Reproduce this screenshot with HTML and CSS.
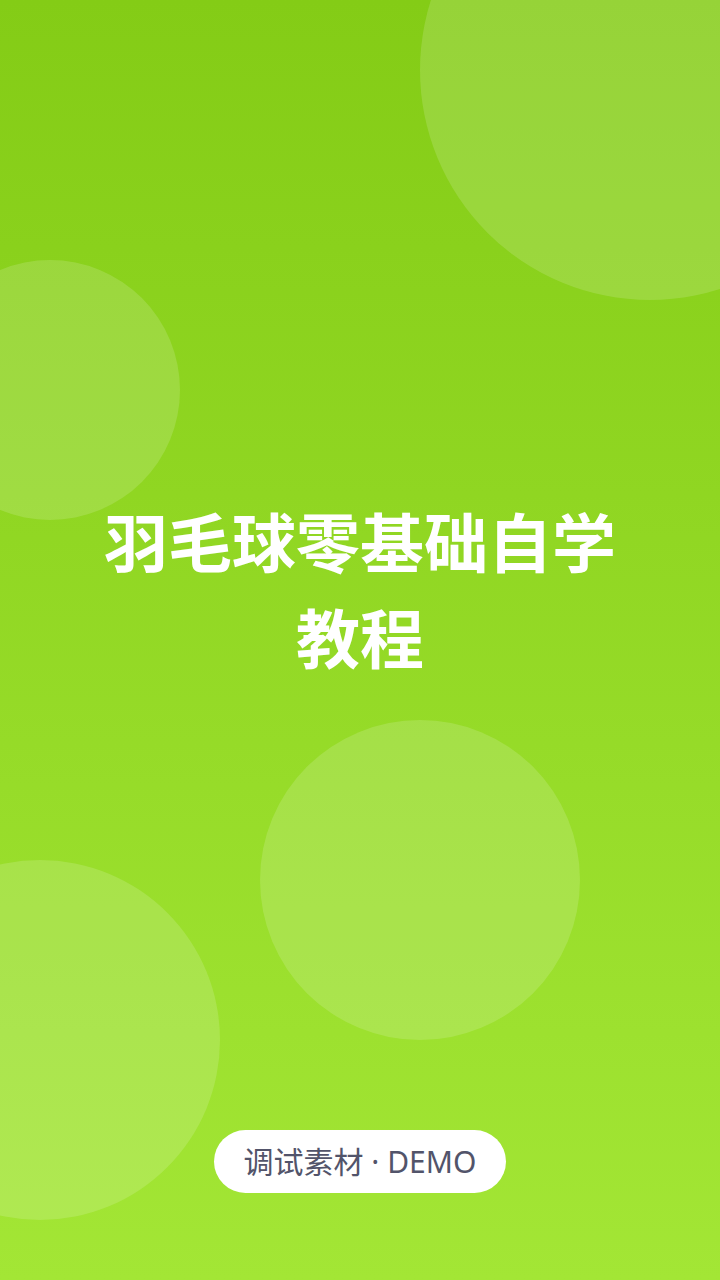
FILE: index.html
```html
<!DOCTYPE html>
<html lang="zh-CN">
<head>
    <meta charset="UTF-8">
    <meta name="viewport" content="width=device-width, initial-scale=1.0">
    <title>羽毛球零基础自学教程</title>
    <link rel="stylesheet" href="styles.css">
</head>
<body>
    <div class="screen">
        <div class="bubble bubble-1"></div>
        <div class="bubble bubble-2"></div>
        <div class="bubble bubble-3"></div>
        <div class="bubble bubble-4"></div>
        <div class="hero">
            <h1 class="title">羽毛球零基础自学教程</h1>
        </div>
        <div class="footer">
            <span class="tag">调试素材 · DEMO</span>
        </div>
    </div>
</body>
</html>
```

FILE: styles.css
```css
body {
    margin: 0;
    font-family: "Noto Sans CJK SC", "Noto Sans", sans-serif;
}
.screen {
    position: relative;
    overflow: hidden;
    width: 720px;
    height: 1280px;
    display: flex;
    flex-direction: column;
    background: linear-gradient(180deg, #84cc16 0%, #a3e635 100%);
}
.bubble {
    position: absolute;
    border-radius: 50%;
    background: rgba(255, 255, 255, 0.15);
}
.bubble-1 {
    left: 420px;
    top: -160px;
    width: 460px;
    height: 460px;
}
.bubble-2 {
    left: -80px;
    top: 260px;
    width: 260px;
    height: 260px;
}
.bubble-3 {
    left: 260px;
    top: 720px;
    width: 320px;
    height: 320px;
}
.bubble-4 {
    left: -140px;
    top: 860px;
    width: 360px;
    height: 360px;
}
.hero {
    position: relative;
    flex: 1;
    display: flex;
    align-items: center;
    justify-content: center;
    padding: 44px 80px 0;
}
.title {
    margin: 0;
    color: #fff;
    font-size: 64px;
    font-weight: 700;
    line-height: 96px;
    text-align: center;
}
.footer {
    position: relative;
    display: flex;
    justify-content: center;
    padding-bottom: 87px;
}
.tag {
    display: inline-block;
    height: 63px;
    line-height: 63px;
    padding: 0 30px;
    border-radius: 32px;
    background: #fff;
    color: #52546a;
    font-family: "Noto Sans", "Noto Sans CJK SC", sans-serif;
    font-size: 30px;
}
```
